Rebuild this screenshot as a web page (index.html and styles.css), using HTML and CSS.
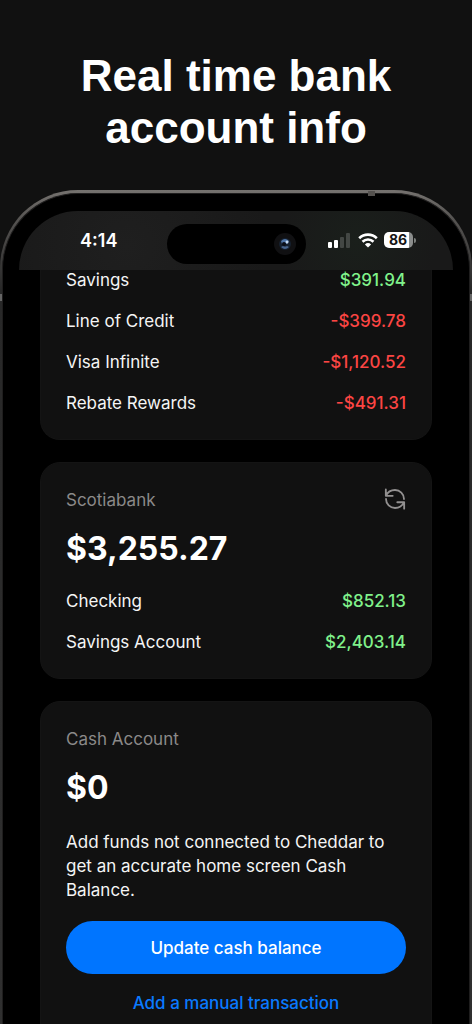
FILE: index.html
```html
<!DOCTYPE html>
<html lang="en">
<head>
<meta charset="utf-8">
<meta name="viewport" content="width=device-width, initial-scale=1">
<title>Real time bank account info</title>
<link rel="stylesheet" href="styles.css">
</head>
<body>
<main class="promo">
  <h1 class="headline">Real time bank<br>account info</h1>
  <div class="phone">
    <span class="antenna"></span>
    <span class="side side-left"></span>
    <span class="side side-right"></span>
    <div class="bezel">
      <div class="screen">
        <header class="status">
          <time class="clock">4:14</time>
          <div class="island">
            <svg class="camera" viewBox="0 0 24 24" aria-hidden="true">
              <circle cx="12" cy="12" r="11" fill="#101012"/>
              <circle cx="12" cy="12" r="6" fill="#15202f"/>
              <path d="M8 9q4-4 8 0l-2 3q-2-2-5 0z" fill="#4f75a8"/>
              <path d="M8 15q4 4 8 0l-2-1q-2 1-4 0z" fill="#48658f"/>
              <circle cx="14" cy="10" r="1.500" fill="#c4d8ef"/>
              <circle cx="11" cy="12" r="2" fill="#0a0e18"/>
            </svg>
          </div>
          <div class="indicators">
            <svg class="signal" viewBox="0 0 24 16" aria-label="Signal">
              <rect x="0" y="10" width="4" height="6" rx="1" fill="#fff"/>
              <rect x="6" y="8" width="4" height="8" rx="1" fill="#fff"/>
              <rect x="12" y="5" width="4" height="11" rx="1" fill="#434744"/>
              <rect x="18" y="1" width="4" height="15" rx="1" fill="#434744"/>
            </svg>
            <svg class="wifi" viewBox="0 0 20 15" aria-label="Wi-Fi">
              <g fill="none" stroke="#fff" stroke-width="2.6">
                <path d="M1.2 5.2a12.6 12.6 0 0 1 17.6 0"/>
                <path d="M4.5 8.7a7.9 7.9 0 0 1 11 0"/>
              </g>
              <path d="M10 14.6l-3.1-3.1a4.5 4.5 0 0 1 6.2 0z" fill="#fff"/>
            </svg>
            <div class="battery"><span class="level">86</span></div>
          </div>
        </header>

        <div class="accounts">
          <section class="card card-scrolled">
            <ul class="rows">
              <li class="row"><span>Savings</span><span class="money gain">$391.94</span></li>
              <li class="row"><span>Line of Credit</span><span class="money loss">-$399.78</span></li>
              <li class="row"><span>Visa Infinite</span><span class="money loss">-$1,120.52</span></li>
              <li class="row"><span>Rebate Rewards</span><span class="money loss">-$491.31</span></li>
            </ul>
          </section>

          <section class="card">
            <div class="card-head">
              <h2 class="bank">Scotiabank</h2>
              <button class="refresh" type="button" aria-label="Refresh">
                <svg viewBox="0 0 24 24" aria-hidden="true">
                  <path d="M2 1.500v7h7.500M2 8.500C4 4.500 7.500 2.200 12 2.200c5.400 0 9.800 4.200 9.800 9.800M22 22.500v-7h-7.500M22 15.500c-2 4-5.500 6.300-10 6.300-5.400 0-9.800-4.200-9.800-9.800"/>
                </svg>
              </button>
            </div>
            <p class="total">$3,255.27</p>
            <ul class="rows">
              <li class="row"><span>Checking</span><span class="money gain">$852.13</span></li>
              <li class="row"><span>Savings Account</span><span class="money gain">$2,403.14</span></li>
            </ul>
          </section>

          <section class="card card-last">
            <h2 class="bank">Cash Account</h2>
            <p class="total">$0</p>
            <p class="note">Add funds not connected to Cheddar to get an accurate home screen Cash Balance.</p>
            <button class="primary" type="button">Update cash balance</button>
            <a class="secondary" href="#">Add a manual transaction</a>
          </section>
        </div>
      </div>
    </div>
  </div>
</main>
</body>
</html>
```
FILE: styles.css
```css
* { box-sizing: border-box; margin: 0; padding: 0; }

body {
  background: #111;
  color: #f5f5f5;
  font-family: Inter, "Liberation Sans", sans-serif;
  font-size: 17px;
}

.promo {
  display: flex;
  flex-direction: column;
  height: 100vh;
  overflow: hidden;
}

.headline {
  padding: 50px 24px 36px;
  color: #fff;
  font: bold 44px/52px "Liberation Sans", sans-serif;
  text-align: center;
}

.phone {
  position: relative;
  flex: 1 0 auto;
  display: flex;
  padding: 3px 2px 0;
  border-radius: 78px 78px 0 0;
  background: linear-gradient(#75726f, #555351 30px, #282828 100px, #303030);
}

.antenna {
  position: absolute;
  top: 1px;
  right: 97px;
  width: 7px;
  height: 5px;
  background: #55524f;
  z-index: 1;
}

.side {
  position: absolute;
  top: 104px;
  width: 2px;
  height: 7px;
  background: #656565;
}
.side-left { left: 0; }
.side-right { right: 0; }

.bezel {
  flex: 1;
  display: flex;
  padding: 17px 16px 0;
  border: 1px solid #1f1e1e;
  border-bottom: 0;
  border-radius: 76px 76px 0 0;
  background: #000;
}

.screen {
  flex: 1;
  border-radius: 59px 59px 0 0;
  overflow: hidden;
}

.status {
  display: grid;
  grid-template-columns: 1fr 139px 1fr;
  height: 59px;
  padding-top: 13px;
  background:
    radial-gradient(circle at 78% 50%, #1a1f1b, rgba(26, 31, 27, 0) 80px),
    radial-gradient(circle at 25% 60%, #1f1f1f, #191919 140px);
}

.clock {
  padding-left: 12px;
  color: #fff;
  font-size: 18px;
  font-weight: 600;
  line-height: 34px;
  text-align: center;
}

.island {
  display: flex;
  align-items: center;
  justify-content: flex-end;
  height: 40px;
  padding-right: 9px;
  border-radius: 20px;
  background: #000;
}
.camera { width: 24px; height: 24px; }

.indicators {
  display: flex;
  align-items: center;
  gap: 6px;
  height: 32px;
  padding-left: 22px;
}
.signal { width: 24px; height: 16px; }
.wifi { width: 20px; height: 15px; }

.battery {
  display: flex;
  align-items: center;
  gap: 1px;
}
.battery::after {
  content: "";
  width: 2px;
  height: 5px;
  border-radius: 0 2px 2px 0;
  background: #7c7f7d;
}
.level {
  width: 29px;
  border-radius: 5px;
  background: linear-gradient(90deg, #fff 86%, #8b8d8c 86%);
  color: #141414;
  font-size: 14px;
  font-weight: 700;
  line-height: 16px;
  text-align: center;
}

.accounts {
  display: flex;
  flex-direction: column;
  gap: 22px;
  padding: 0 21px;
}

.card {
  display: flex;
  flex-direction: column;
  padding: 25px;
  border: 1px solid #141414;
  border-radius: 20px;
  background: #111;
}
.card-scrolled {
  padding-top: 0;
  border-top: 0;
  border-radius: 0 0 20px 20px;
}
.card-last { border-radius: 20px 20px 0 0; }

.card-head {
  display: flex;
  align-items: flex-start;
  justify-content: space-between;
}

.bank {
  color: #8b8989;
  font-size: 17px;
  font-weight: 400;
  line-height: 24px;
}

.refresh {
  width: 22px;
  height: 22px;
  border: 0;
  background: none;
}
.refresh svg {
  display: block;
  fill: none;
  stroke: #929090;
  stroke-width: 2;
  stroke-linecap: round;
  stroke-linejoin: round;
}

.total {
  margin: 17px 0 22px;
  color: #fff;
  font-size: 32px;
  font-weight: 700;
  line-height: 40px;
}

.rows {
  display: flex;
  flex-direction: column;
  gap: 20px;
  list-style: none;
}
.row {
  display: flex;
  justify-content: space-between;
  line-height: 21px;
}
.money { font-weight: 500; }
.gain { color: #80f28b; }
.loss { color: #fb4543; }

.note { line-height: 24px; }

.primary {
  height: 53px;
  margin-top: 19px;
  border: 0;
  border-radius: 27px;
  background: #0075ff;
  color: #fff;
  font: 500 17px Inter, "Liberation Sans", sans-serif;
}

.secondary {
  margin-top: 17px;
  color: #0a7aff;
  font-weight: 500;
  line-height: 24px;
  text-align: center;
  text-decoration: none;
}
```
